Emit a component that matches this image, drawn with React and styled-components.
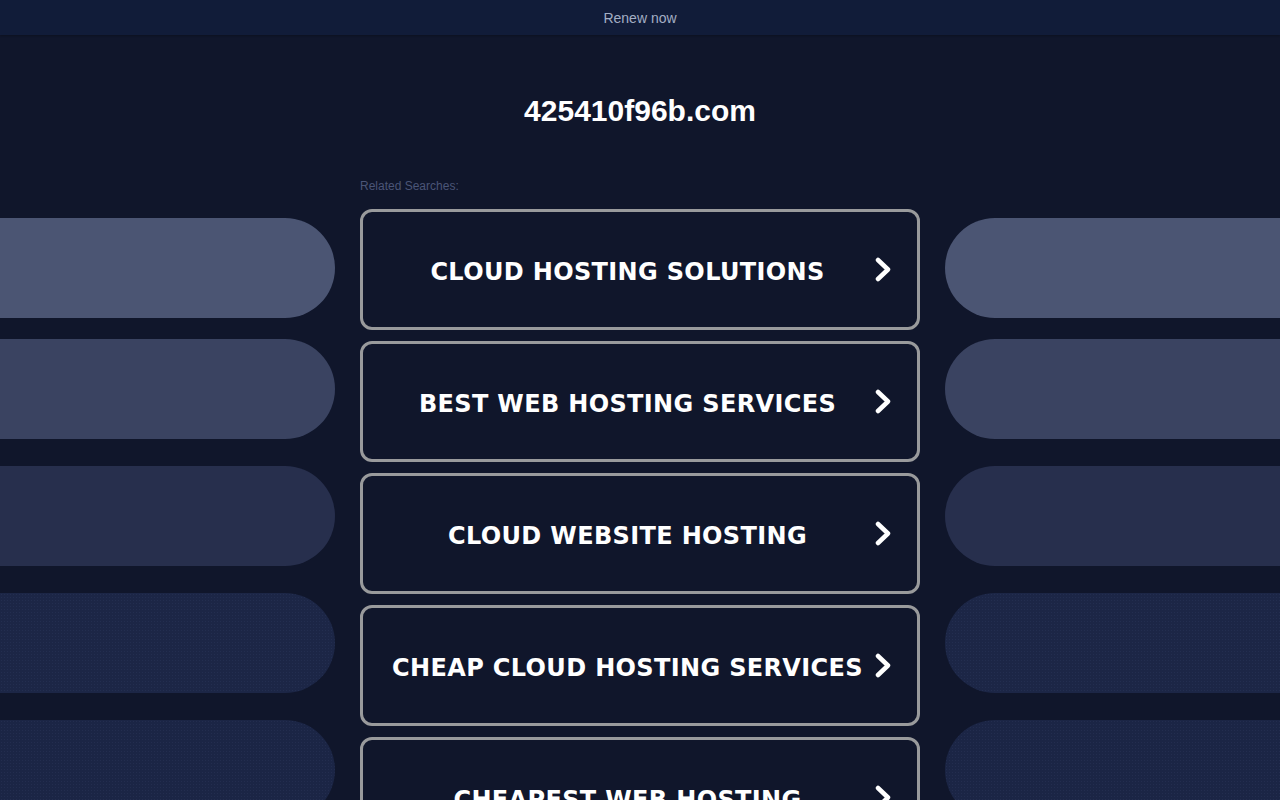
import React from 'react';
import { styled, createGlobalStyle } from 'styled-components';

const searches = [
  'Cloud Hosting Solutions',
  'Best Web Hosting Services',
  'Cloud Website Hosting',
  'Cheap Cloud Hosting Services',
  'Cheapest Web Hosting',
];

const pillColors = ['#4b5573', '#3a4361', '#272f4d', '#1c2646', '#1b2545'];

const Chevron = () => (
  <svg width="16" height="25" viewBox="0 0 16 25" fill="none">
    <polyline
      points="3,3 13,12.5 3,22"
      stroke="#fff"
      strokeWidth="4.5"
      strokeLinecap="round"
      strokeLinejoin="round"
    />
  </svg>
);

const App = () => {
  return (
    <Page>
      <GlobalStyle />
      <TopBar>Renew now</TopBar>
      <Title>425410f96b.com</Title>
      <Layout>
        <Side>
          {pillColors.map((c, i) => (
            <Pill key={c} $color={c} $first={i === 0} $dotted={i >= 3} />
          ))}
        </Side>
        <Center>
          <Related>Related Searches:</Related>
          <List>
            {searches.map((s) => (
              <SearchLink key={s} href="#">
                <Label>{s}</Label>
                <Arrow><Chevron /></Arrow>
              </SearchLink>
            ))}
          </List>
        </Center>
        <Side>
          {pillColors.map((c, i) => (
            <Pill key={c} $color={c} $first={i === 0} $dotted={i >= 3} $right />
          ))}
        </Side>
      </Layout>
    </Page>
  );
};

export default App;

const GlobalStyle = createGlobalStyle`
body {
  margin: 0;
  background: #10162b;
  font-family: 'Liberation Sans', Arial, sans-serif;
  overflow-x: hidden;
}
`;

const Page = styled.div`
min-height: 100vh;
background: #10162b;
`;

const TopBar = styled.div`
height: 35px;
display: flex;
align-items: center;
justify-content: center;
background: #111c39;
box-shadow: 0 1px 2px rgba(0, 0, 0, 0.25);
color: #a3aec4;
font-size: 14px;
`;

const Title = styled.h1`
margin: 58px 0 0;
height: 36px;
line-height: 36px;
text-align: center;
color: #fff;
font-size: 30px;
font-weight: bold;
`;

const Layout = styled.div`
display: grid;
grid-template-columns: 335px 560px 335px;
column-gap: 25px;
margin-top: 46px;
`;

const Side = styled.div`
display: flex;
flex-direction: column;
gap: 27px;
padding-top: 43px;
`;

const Pill = styled.div`
height: 100px;
margin-bottom: ${(p) => (p.$first ? '-6px' : '0')};
background-color: ${(p) => p.$color};
background-image: ${(p) =>
  p.$dotted
    ? 'radial-gradient(rgba(110, 130, 180, 0.09) 0.6px, transparent 0.9px)'
    : 'none'};
background-size: 3px 3px;
border-radius: ${(p) => (p.$right ? '50px 0 0 50px' : '0 50px 50px 0')};
`;

const Center = styled.div`
display: flex;
flex-direction: column;
`;

const Related = styled.div`
height: 22px;
line-height: 22px;
font-size: 12px;
color: #4b5577;
margin-bottom: 12px;
`;

const List = styled.div`
display: flex;
flex-direction: column;
gap: 11px;
`;

const SearchLink = styled.a`
box-sizing: border-box;
height: 121px;
display: flex;
align-items: center;
padding: 4px 26px 0 27px;
border: 3px solid #999a9c;
border-radius: 12px;
background: #10162b;
text-decoration: none;
`;

const Label = styled.span`
flex: 1;
text-align: center;
color: #fff;
font-family: 'DejaVu Sans', Verdana, sans-serif;
font-weight: bold;
font-size: 24px;
letter-spacing: 0.35px;
text-transform: uppercase;
white-space: nowrap;
`;

const Arrow = styled.span`
display: flex;
margin-left: 10px;
margin-top: -5px;
`;
